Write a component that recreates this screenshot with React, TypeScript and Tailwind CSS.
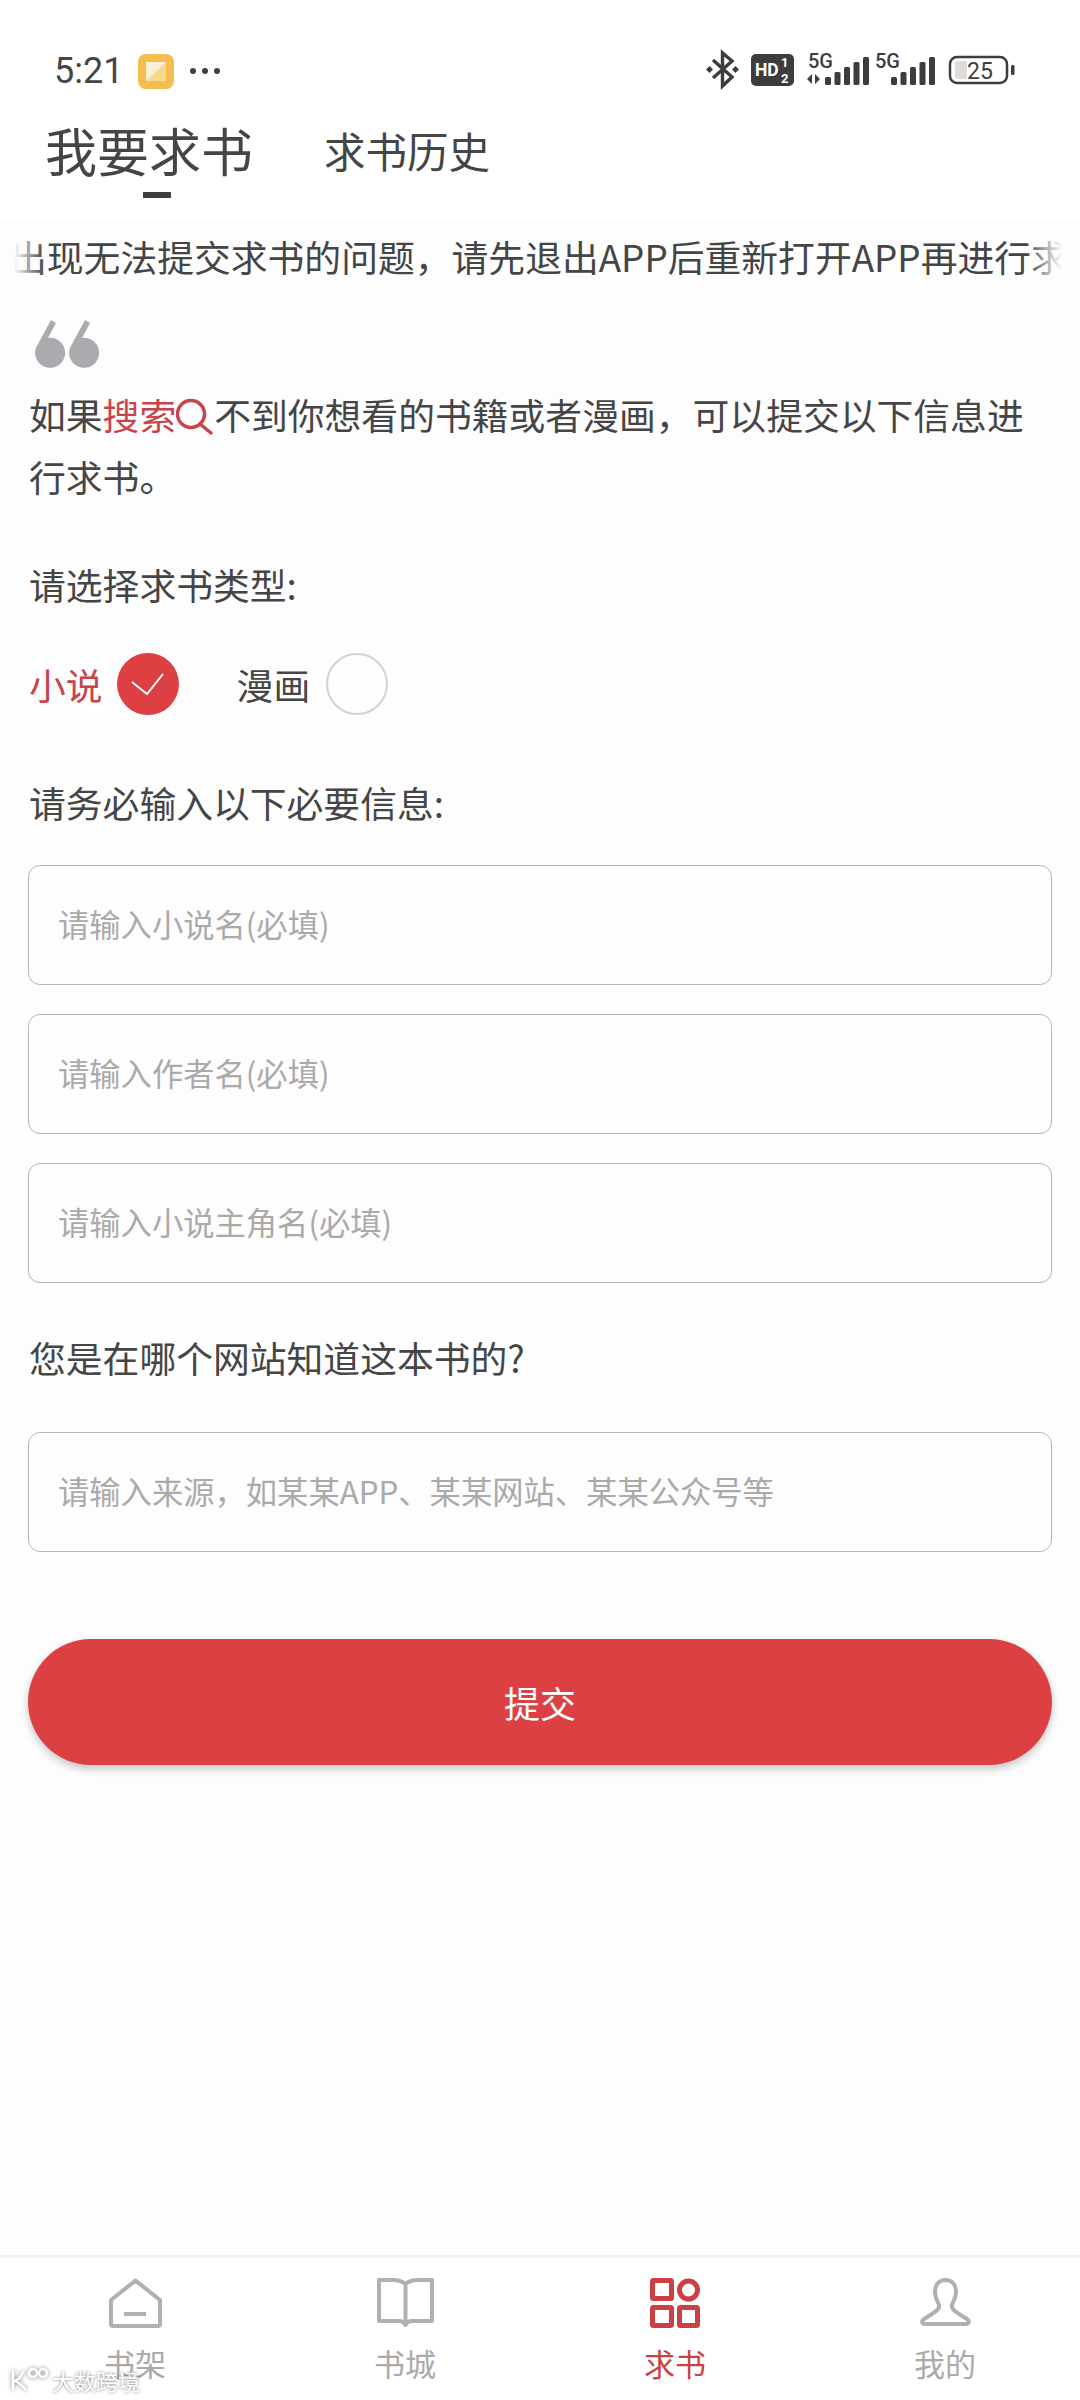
const font = "font-['Noto_Sans_CJK_SC','Noto_Sans',sans-serif]";

const inputs = ["请输入小说名(必填)", "请输入作者名(必填)", "请输入小说主角名(必填)"];

function Field({ text }: { text: string }) {
  return (
    <div className="flex h-[120px] items-center rounded-[12px] border-[1.5px] border-[#b4b4b4] bg-[#fdfdfd] pb-[2px] pl-[29px] text-[31.300px] text-[#aaaaaa]">
      {text}
    </div>
  );
}

function Bars({ x }: { x: number }) {
  const tops = [77, 72, 67, 62, 57];
  return (
    <>
      {tops.map((top, i) => (
        <rect key={top} x={x + i * 9.5} y={top} width="6" height={85 - top} rx="1.500" fill="currentColor" />
      ))}
    </>
  );
}

// drawn in page coordinates so the numbers read straight off the reference
function StatusIcons() {
  return (
    <svg width="320" height="45" viewBox="700 47 320 45" className="text-[#3d3d3d]">
      <path d="M713 60l19 17-9.500 9V53l9.500 8-19 17" fill="none" stroke="currentColor" strokeWidth="3.400" />
      <path d="M706 69.500l3.500-3.500 3.500 3.500-3.500 3.500zM732 69.500l3.500-3.500 3.500 3.500-3.500 3.500z" fill="currentColor" />
      <rect x="751" y="54" width="43" height="32" rx="5" fill="currentColor" />
      <text x="755" y="76" fontSize="17.500" fontWeight="700" fill="#fff" fontFamily="Roboto">HD</text>
      <text x="781" y="67" fontSize="13" fontWeight="700" fill="#fff" fontFamily="Roboto">1</text>
      <text x="781" y="83" fontSize="13" fontWeight="700" fill="#fff" fontFamily="Roboto">2</text>
      <text x="808" y="68" fontSize="20" fontWeight="500" fill="currentColor" fontFamily="Roboto">5G</text>
      <path d="M812 74v10l-5-5zM815 74v10l5-5z" fill="currentColor" />
      <Bars x={825} />
      <text x="875" y="68" fontSize="20" fontWeight="500" fill="currentColor" fontFamily="Roboto">5G</text>
      <Bars x={891} />
      <rect x="950" y="57" width="57" height="26" rx="7" fill="none" stroke="currentColor" strokeWidth="2.500" />
      <rect x="955" y="61" width="12" height="18" rx="2" fill="#dddddd" />
      <text x="967" y="79" fontSize="23" fill="currentColor" fontFamily="Roboto">25</text>
      <rect x="1011" y="65" width="3.500" height="10" rx="1.500" fill="currentColor" />
    </svg>
  );
}

function HomeIcon() {
  return (
    <svg width="53" height="50" viewBox="0 0 53 50" fill="none" stroke="#b0b0b0" strokeWidth="4" strokeLinejoin="round">
      <path d="M26.500 2.500L51 22v24a2 2 0 0 1-2 2H4a2 2 0 0 1-2-2V22z" />
      <path d="M15 36h22" />
    </svg>
  );
}

function BookIcon() {
  return (
    <svg width="57" height="49" viewBox="0 0 57 49" fill="none" stroke="#b0b0b0" strokeWidth="4" strokeLinejoin="round">
      <path d="M28.500 6C25 3 20 2 16 2H2v41h20c3 0 5 1 6.500 4 1.500-3 3.500-4 6.500-4h20V2H41c-4 0-9 1-12.500 4zM28.500 6v41" />
    </svg>
  );
}

function GridIcon() {
  return (
    <svg width="50" height="50" viewBox="0 0 50 50" fill="none" stroke="#cc3f44" strokeWidth="5">
      <rect x="2.500" y="2.500" width="19" height="18" rx="1" />
      <circle cx="38.500" cy="12" r="9" />
      <rect x="2.500" y="29.500" width="19" height="18" rx="1" />
      <rect x="29.500" y="29.500" width="18" height="18" rx="1" />
    </svg>
  );
}

function UserIcon() {
  return (
    <svg width="51" height="48" viewBox="0 0 51 48" fill="none" stroke="#b0b0b0" strokeWidth="4" strokeLinejoin="round">
      <path d="M25.500 2C18 2 15 8 15 14c0 6 3 10 4 13 1 4-3 6-7 9l-8 5c-3 2-2 5 1 5h41c3 0 4-3 1-5l-8-5c-4-3-8-5-7-9 1-3 4-7 4-13 0-6-3-12-10.500-12z" />
    </svg>
  );
}

const tabs = [
  { label: "书架", icon: <HomeIcon />, active: false },
  { label: "书城", icon: <BookIcon />, active: false },
  { label: "求书", icon: <GridIcon />, active: true },
  { label: "我的", icon: <UserIcon />, active: false },
];

export default function App() {
  return (
    <div className={`${font} relative flex h-[2400px] w-[1080px] flex-col overflow-hidden bg-[#fdfdfd] text-[#454545]`}>
      <div className="bg-white pb-[22px]">
        {/* status bar */}
        <div className="flex h-[92px] items-end justify-between pl-[54px] pr-[60px]">
          <div className="flex items-center">
            <span className="font-['Roboto'] text-[36px] leading-[42px]">5:21</span>
            <svg width="36" height="35" viewBox="0 0 36 35" className="ml-[15px]">
              <rect width="36" height="35" rx="8" fill="#f4bd4f" />
              <path d="M8 8h20v19H8z" fill="#f9d98c" />
              <path d="M8 8h20L8 27z" fill="#fbf0d6" />
            </svg>
            <div className="ml-[16px] flex gap-[6px]">
              <span className="h-[6px] w-[6px] rounded-full bg-[#3f3f3f]" />
              <span className="h-[6px] w-[6px] rounded-full bg-[#3f3f3f]" />
              <span className="h-[6px] w-[6px] rounded-full bg-[#3f3f3f]" />
            </div>
          </div>
          <StatusIcons />
        </div>

        {/* tabs */}
        <div className="flex h-[100px] items-center pl-[45px] pt-[16px]">
          <span className="text-[52px] leading-[60px]">我要求书</span>
          <span className="ml-[71px] text-[41.500px] leading-[60px]">求书历史</span>
        </div>
        <div className="ml-[143px] h-[6px] w-[28px] bg-[#3f3f3f]" />
      </div>

      {/* notice */}
      <div className="relative flex h-[74px] items-center overflow-hidden whitespace-nowrap pl-[10px] text-[36.800px]">
        出现无法提交求书的问题，请先退出APP后重新打开APP再进行求书
        <div className="absolute inset-y-0 left-0 w-[14px] bg-[#fdfdfd]" />
        <div className="absolute inset-y-0 left-[14px] w-[30px] bg-gradient-to-r from-[#fdfdfd] to-transparent" />
        <div className="absolute inset-y-0 right-[18px] w-[36px] bg-gradient-to-l from-[#fdfdfd] to-transparent" />
        <div className="absolute inset-y-0 right-0 w-[18px] bg-[#fdfdfd]" />
      </div>

      <div className="flex flex-1 flex-col px-[28px]">
        <svg width="66" height="48" viewBox="0 0 66 48" className="ml-[7px] mt-[26px]" fill="#a9abae">
          <path d="M3 24L16 0l5 3-8 15a15 15 0 1 1-10 6z" />
          <path d="M37 24L50 0l5 3-8 15a15 15 0 1 1-10 6z" />
        </svg>

        <p className="mt-[15px] pl-[1px] text-[36.800px] leading-[62px]">
          如果<span className="text-[#c9444a]">搜索</span>
          <svg width="38" height="37" viewBox="0 0 38 37" fill="none" stroke="#c9444a" strokeWidth="3.500" className="inline-block align-[-5px]">
            <circle cx="15" cy="16" r="13.500" />
            <path d="M24 26l11 9" strokeLinecap="round" />
          </svg>
          不到你想看的书籍或者漫画，可以提交以下信息进行求书。
        </p>

        <div className="mt-[50px] pl-[1px] text-[36.800px] leading-[54px]">请选择求书类型:</div>

        <div className="mt-[42px] flex items-center">
          <span className="pl-[1px] text-[36.800px] leading-[62px] text-[#c9444a]">小说</span>
          <span className="ml-[14px] flex h-[62px] w-[62px] items-center justify-center rounded-full bg-[#dc4043]">
            <svg width="33" height="22" viewBox="0 0 33 22" fill="none" stroke="#fff" strokeWidth="2">
              <path d="M1 9l15 12L32 1" />
            </svg>
          </span>
          <span className="ml-[58px] text-[36.800px] leading-[62px]">漫画</span>
          <span className="ml-[16px] h-[62px] w-[62px] rounded-full border-2 border-[#d2d2d2]" />
        </div>

        <div className="mt-[60px] pl-[1px] text-[36.800px] leading-[54px]">请务必输入以下必要信息:</div>

        <div className="mt-[36px] flex flex-col gap-[29px]">
          {inputs.map((text) => (
            <Field key={text} text={text} />
          ))}
        </div>

        <div className="mt-[47px] pl-[1px] text-[36.800px] leading-[54px]">您是在哪个网站知道这本书的?</div>

        <div className="mt-[48px]">
          <Field text="请输入来源，如某某APP、某某网站、某某公众号等" />
        </div>

        <button className="mt-[87px] flex h-[126px] w-full items-center justify-center rounded-full bg-[#dc4043] text-[36px] text-white shadow-[0_4px_8px_rgba(0,0,0,0.22)]">
          提交
        </button>
      </div>

      {/* bottom nav */}
      <div className="grid h-[145px] grid-cols-4 border-t-[3px] border-[#f3f3f3] bg-white">
        {tabs.map((tab) => (
          <div key={tab.label} className="flex flex-col items-center pt-[20px]">
            <div className="flex h-[50px] items-start">{tab.icon}</div>
            <span className={`mt-[15px] text-[31px] leading-[40px] ${tab.active ? "text-[#cc3f44]" : "text-[#aaaaaa]"}`}>
              {tab.label}
            </span>
          </div>
        ))}
      </div>

      {/* watermark */}
      <div className="absolute bottom-[6px] left-[10px] flex items-center">
        <svg width="40" height="26" viewBox="0 0 40 26" fill="none" stroke="#fff" strokeWidth="2.500" className="drop-shadow-[0_0_2px_rgba(0,0,0,0.5)]">
          <path d="M3 3v20M3 15c5-2 9-6 10-11M6 14c3 2 7 5 10 9" />
          <circle cx="23" cy="6" r="4" />
          <circle cx="33" cy="6" r="4" />
        </svg>
        <span className="ml-[2px] text-[22px] leading-[28px] text-white [text-shadow:0_0_3px_rgba(0,0,0,0.55)]">大数跨境</span>
      </div>
    </div>
  );
}
